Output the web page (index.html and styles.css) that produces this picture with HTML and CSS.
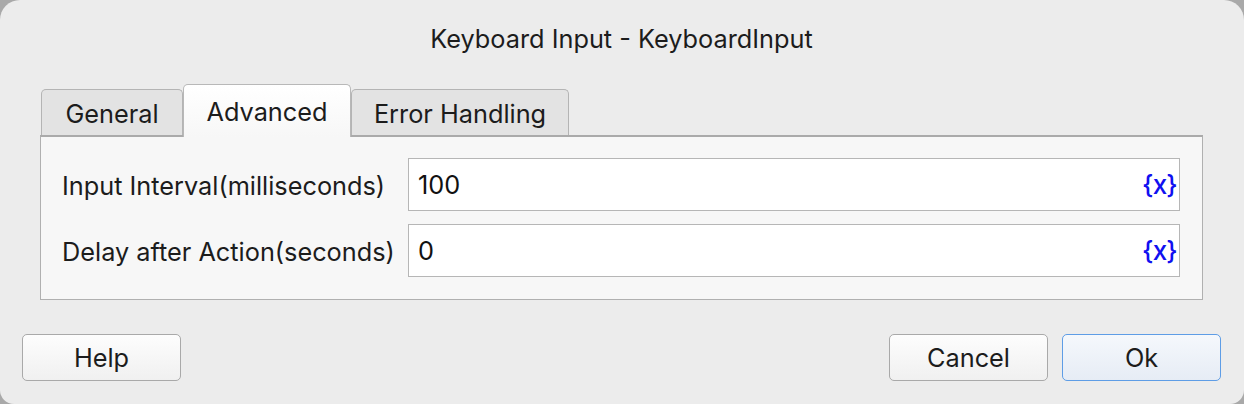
FILE: index.html
```html
<!DOCTYPE html>
<html lang="en">
<head>
<meta charset="utf-8">
<title>Keyboard Input - KeyboardInput</title>
<link rel="stylesheet" href="styles.css">
</head>
<body>
<div class="window">
  <div class="title">Keyboard Input - KeyboardInput</div>
  <div class="tabs">
    <div class="tab tab-general">General</div>
    <div class="tab tab-advanced active">Advanced</div>
    <div class="tab tab-error">Error Handling</div>
  </div>
  <div class="panel">
    <div class="row">
      <label class="label">Input Interval(milliseconds)</label>
      <div class="field"><span class="value">100</span><span class="var">{x}</span></div>
    </div>
    <div class="row">
      <label class="label">Delay after Action(seconds)</label>
      <div class="field"><span class="value">0</span><span class="var">{x}</span></div>
    </div>
  </div>
  <div class="footer">
    <button class="btn">Help</button>
    <div class="btn-group">
      <button class="btn">Cancel</button>
      <button class="btn btn-primary">Ok</button>
    </div>
  </div>
</div>
</body>
</html>
```
FILE: styles.css
```css
html, body {
  margin: 0;
  padding: 0;
}
body {
  width: 1244px;
  height: 404px;
  background: #a9a9a9;
  font-family: Inter, "Noto Sans", "Liberation Sans", sans-serif;
  color: #1c1c1c;
  overflow: hidden;
}
.window {
  box-sizing: border-box;
  width: 1244px;
  height: 404px;
  background: #ececec;
  border-radius: 20px 20px 14px 14px;
  padding: 24px 41px 0 40px;
  display: flex;
  flex-direction: column;
}
.title {
  height: 30px;
  line-height: 30px;
  font-size: 25.3px;
  text-align: center;
}
.tabs {
  margin-top: 30px;
  height: 51px;
  padding-left: 1px;
  display: flex;
  align-items: flex-start;
}
.tab {
  box-sizing: border-box;
  margin-top: 5px;
  height: 46px;
  background: #e3e3e3;
  border: 1px solid #b4b4b4;
  border-bottom: none;
  border-radius: 5px 5px 0 0;
  font-size: 25.3px;
  line-height: 30px;
  padding-top: 9px;
  text-align: center;
}
.tab-general { width: 142px; }
.tab-advanced { width: 168px; }
.tab-error { width: 218px; }
.tab.active {
  position: relative;
  z-index: 1;
  margin-top: 0;
  height: 53px;
  padding-top: 12px;
  background: linear-gradient(#ffffff, #f7f7f7);
  border-color: #b8b8b8;
}
.panel {
  box-sizing: border-box;
  height: 165px;
  background: #f7f7f7;
  border: 1px solid #b0b0b0;
  border-top: 2px solid #aaaaaa;
  padding: 21px 22px 0 21px;
  display: flex;
  flex-direction: column;
  gap: 13px;
}
.row {
  display: grid;
  grid-template-columns: 346px 1fr;
  align-items: center;
}
.label {
  font-size: 25.3px;
  padding-top: 2px;
}
.field {
  box-sizing: border-box;
  height: 53px;
  background: #ffffff;
  border: 1px solid #b6b6b6;
  display: flex;
  align-items: center;
  justify-content: space-between;
  padding: 0 2px 0 9px;
  font-size: 25.3px;
}
.value {
  color: #111111;
}
.var {
  color: #1010f0;
  font-size: 26px;
  font-weight: 500;
  letter-spacing: -0.8px;
}
.footer {
  margin: 34px -18px 0 -18px;
  display: flex;
  justify-content: space-between;
}
.btn-group {
  display: flex;
  gap: 14px;
}
.btn {
  box-sizing: border-box;
  width: 159px;
  height: 47px;
  border: 1.5px solid #a9a9a9;
  border-radius: 5px;
  background: linear-gradient(#fdfdfd, #f0f0f0);
  font-family: Inter, "Noto Sans", "Liberation Sans", sans-serif;
  font-size: 25.3px;
  color: #1c1c1c;
  padding: 0;
}
.btn-primary {
  border-color: #5e9de6;
  background: linear-gradient(#f5f8fc, #e6ecf5);
}
```
